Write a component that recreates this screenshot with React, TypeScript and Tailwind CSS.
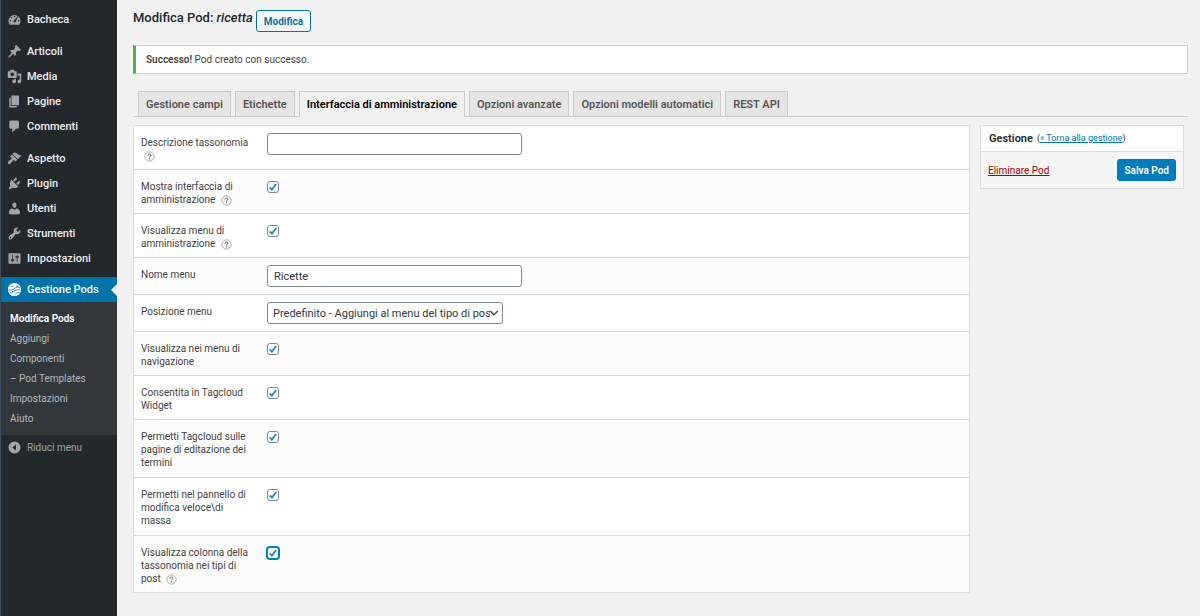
import { useState, type ReactNode } from "react";

type MenuEntry = { name: string; icon: ReactNode };

const path = (d: string) => <path d={d} fillRule="evenodd" />;

function Icon({ children }: { children: ReactNode }) {
  return (
    <svg viewBox="0 0 20 20" className="size-[15px] shrink-0 fill-current" aria-hidden="true">
      {children}
    </svg>
  );
}

const menuGroups: MenuEntry[][] = [
  [
    {
      name: "Bacheca",
      icon: path(
        "M3.76 17h12.48A7.98 7.98 0 0 0 18 12a8 8 0 0 0-16 0c0 1.88.66 3.62 1.76 5zM10 5a1 1 0 1 1 0 2 1 1 0 0 1 0-2zM6 6.500a1 1 0 1 1 0 2 1 1 0 0 1 0-2zM14.6 6.300l-3.100 6.700a1.500 1.500 0 1 1-2.400-1.700l4.900-5.400c.3-.3.8 0 .6.4zM4.500 10.500a1 1 0 1 1 0 2 1 1 0 0 1 0-2zM15.500 10.500a1 1 0 1 1 0 2 1 1 0 0 1 0-2z"
      ),
    },
  ],
  [
    {
      name: "Articoli",
      icon: path(
        "M10.44 3.02l1.82-1.82 6.36 6.35-1.83 1.82c-1.05-.68-2.48-.57-3.41.36l-.75.75c-.92.93-1.04 2.35-.35 3.41l-1.83 1.82-2.41-2.41-2.8 2.79c-.42.42-3.38 2.71-3.8 2.29s1.86-3.39 2.28-3.81l2.79-2.79L4.1 9.36l1.83-1.82c1.05.69 2.48.57 3.4-.36l.75-.75c.93-.92 1.05-2.35.36-3.41z"
      ),
    },
    {
      name: "Media",
      icon: path(
        "M13 11V4c0-.55-.45-1-1-1h-1.67L9 1H5L3.67 3H2c-.55 0-1 .45-1 1v7c0 .55.45 1 1 1h10c.55 0 1-.45 1-1zM7 4.5c1.38 0 2.5 1.12 2.5 2.5S8.38 9.5 7 9.5 4.5 8.38 4.5 7 5.62 4.5 7 4.5zM14 6h5v10.5c0 1.38-1.12 2.5-2.5 2.5S14 17.88 14 16.5s1.12-2.5 2.5-2.5c.17 0 .34.02.5.05V9h-3V6zm-4 8.05V13h2v3.5c0 1.38-1.12 2.5-2.5 2.5S7 17.88 7 16.5 8.12 14 9.5 14c.17 0 .34.02.5.05z"
      ),
    },
    { name: "Pagine", icon: path("M6 15V2h10v13H6zm-1 1h8v2H3V5h2v11z") },
    {
      name: "Commenti",
      icon: path("M5 2h9c1.1 0 2 .9 2 2v7c0 1.1-.9 2-2 2h-2l-5 5v-5H5c-1.1 0-2-.9-2-2V4c0-1.1.9-2 2-2z"),
    },
  ],
  [
    {
      name: "Aspetto",
      icon: path(
        "M14.48 11.06L7.41 3.99l1.5-1.5c.5-.56 2.3-.47 3.51.32 1.21.8 1.43 1.28 2.91 2.1 1.18.64 2.45 1.26 4.45.85zm-.71.71L6.7 4.7 4.93 6.47c-.39.39-.39 1.02 0 1.41l1.06 1.06c.39.39.39 1.03 0 1.42-.6.6-1.43 1.11-2.21 1.69-.35.26-.7.53-1.01.84C1.43 14.23.4 16.08 1.4 17.07c.99 1 2.84-.03 4.18-1.36.31-.31.58-.66.85-1.02.57-.78 1.08-1.61 1.69-2.21.39-.39 1.02-.39 1.41 0l1.06 1.06c.39.39 1.02.39 1.41 0z"
      ),
    },
    {
      name: "Plugin",
      icon: path(
        "M13.11 4.36L9.87 7.6 8 5.73l3.24-3.24c.35-.34 1.05-.2 1.56.32.52.51.66 1.21.31 1.55zm-8 1.77l.91-1.12 9.01 9.01-1.19.84c-.71.71-2.63 1.16-3.82 1.16H6.14L4.9 17.26c-.59.59-1.54.59-2.12 0-.59-.58-.59-1.53 0-2.12l1.24-1.24v-3.88c0-1.13.4-3.19 1.09-3.89zm7.26 3.97l3.24-3.24c.34-.35 1.04-.21 1.55.31.52.51.66 1.21.31 1.55l-3.24 3.25z"
      ),
    },
    {
      name: "Utenti",
      icon: path(
        "M10 9.25c-2.27 0-2.73-3.44-2.73-3.44C7 4.02 7.82 2 9.97 2c2.16 0 2.98 2.02 2.71 3.81 0 0-.41 3.44-2.68 3.44zm0 2.57L12.72 10c2.39 0 4.52 2.33 4.52 4.53v2.49s-3.65 1.13-7.24 1.13c-3.65 0-7.24-1.13-7.24-1.13v-2.49c0-2.25 1.94-4.48 4.47-4.48z"
      ),
    },
    {
      name: "Strumenti",
      icon: path(
        "M16.68 9.77c-1.34 1.34-3.3 1.67-4.95.99l-5.41 6.52c-.99.99-2.59.99-3.58 0s-.99-2.59 0-3.57l6.52-5.42c-.68-1.65-.35-3.61.99-4.95 1.28-1.28 3.12-1.62 4.72-1.06l-2.89 2.89 2.82 2.82 2.86-2.87c.53 1.58.18 3.39-1.08 4.65zM3.81 16.21c.4.39 1.04.39 1.43 0 .4-.4.4-1.04 0-1.43-.39-.4-1.03-.4-1.43 0-.39.39-.39 1.03 0 1.43z"
      ),
    },
    {
      name: "Impostazioni",
      icon: path(
        "M18 16V4c0-.55-.45-1-1-1H3c-.55 0-1 .45-1 1v12c0 .55.45 1 1 1h14c.55 0 1-.45 1-1zM8 11h1c.55 0 1 .45 1 1s-.45 1-1 1H8v1.5c0 .28-.22.5-.5.5s-.5-.22-.5-.5V13H6c-.55 0-1-.45-1-1s.45-1 1-1h1V5.5c0-.28.22-.5.5-.5s.5.22.5.5V11zm5-2h-1c-.55 0-1-.45-1-1s.45-1 1-1h1V5.5c0-.28.22-.5.5-.5s.5.22.5.5V7h1c.55 0 1 .45 1 1s-.45 1-1 1h-1v5.5c0 .28-.22.5-.5.5s-.5-.22-.5-.5V9z"
      ),
    },
  ],
];

const submenu = ["Aggiungi", "Componenti", "– Pod Templates", "Impostazioni", "Aiuto"];

function Sidebar() {
  return (
    <nav aria-label="Menu principale" className="flex w-[117px] shrink-0 flex-col border-l border-[#3f4f59] bg-[#23282d] pt-[7px] text-[11px] leading-[13px] font-medium text-[#eee]">
      <div className="flex flex-col gap-[7px]">
        {menuGroups.map((group) => (
          <ul key={group[0].name}>
            {group.map((entry) => (
              <li key={entry.name}>
                <a href="#" className="flex h-[25px] items-center gap-[5px] pl-[6px]">
                  <span className="text-[#a0a5aa]"><Icon>{entry.icon}</Icon></span>
                  {entry.name}
                </a>
              </li>
            ))}
          </ul>
        ))}
      </div>
      <a href="#" className="relative mt-[6px] flex h-[25px] items-center gap-[5px] bg-[#0073aa] pl-[6px] text-white">
        <svg viewBox="0 0 20 20" className="size-[15px] shrink-0" aria-hidden="true">
          <circle cx="10" cy="10" r="8.800" fill="#fff" />
          <path
            d="M1.500 10.500c3.500 1.200 6-.2 8.500-2s5-2 8-1.500M4 14.500c3 0 4.500-1.500 6.500-3s5-1.500 7.500-.5M10.500 17c1-2 3-3 6-3M5 6c1.500.6 3 0 4.500-1"
            fill="none"
            stroke="#0073aa"
            strokeWidth="1"
          />
          <circle cx="13.500" cy="5.500" r="1" fill="#0073aa" />
          <circle cx="7.500" cy="12.800" r="1" fill="#0073aa" />
        </svg>
        Gestione Pods
        <svg viewBox="0 0 6 12" className="absolute right-0 h-3 w-[6px]" aria-hidden="true">
          <path d="M6 0v12L0 6z" fill="#f1f1f1" />
        </svg>
      </a>
      <ul className="bg-[#32373c] pt-[6px] pb-[7px] text-[10px] font-normal text-[#b4b9be]">
        <li><a href="#" className="flex h-5 items-center pl-[9px] font-semibold text-white">Modifica Pods</a></li>
        {submenu.map((name) => (
          <li key={name}><a href="#" className="flex h-5 items-center pl-[9px]">{name}</a></li>
        ))}
      </ul>
      <button type="button" className="flex h-[25px] items-center gap-[5px] pl-[6px] text-[10px] font-normal text-[#a0a5aa]">
        <Icon>{path("M10 2a8 8 0 1 1 0 16 8 8 0 0 1 0-16zm2 12V6l-5 4z")}</Icon>
        Riduci menu
      </button>
    </nav>
  );
}

const tabs = [
  "Gestione campi",
  "Etichette",
  "Interfaccia di amministrazione",
  "Opzioni avanzate",
  "Opzioni modelli automatici",
  "REST API",
];

function Help() {
  return (
    <svg viewBox="0 0 20 20" className="ml-[3px] inline-block size-[11px] align-[-3px]" role="img" aria-label="Aiuto">
      <circle cx="10" cy="10" r="8.500" fill="#f6f6f6" stroke="#999" strokeWidth="1.300" />
      <path d="M7.300 8.200c0-3.600 5.400-3.600 5.400-.5 0 1.800-2.700 1.900-2.700 4M10 13.300v2" fill="none" stroke="#666" strokeWidth="1.800" />
    </svg>
  );
}

type Field = {
  id: string;
  label: string;
  kind: "text" | "check" | "select";
  help?: boolean;
  value?: string;
  active?: boolean;
  tall?: boolean;
};

const fields: Field[] = [
  { id: "descrizione", label: "Descrizione tassonomia", kind: "text", help: true, value: "" },
  { id: "mostra-ui", label: "Mostra interfaccia di amministrazione", kind: "check", help: true },
  { id: "mostra-menu", label: "Visualizza menu di amministrazione", kind: "check", help: true },
  { id: "nome-menu", label: "Nome menu", kind: "text", value: "Ricette" },
  { id: "posizione", label: "Posizione menu", kind: "select", value: "Predefinito - Aggiungi al menu del tipo di pos" },
  { id: "navigazione", label: "Visualizza nei menu di navigazione", kind: "check" },
  { id: "tagcloud", label: "Consentita in Tagcloud Widget", kind: "check" },
  { id: "tagcloud-termini", label: "Permetti Tagcloud sulle pagine di editazione dei termini", kind: "check", tall: true },
  { id: "modifica-veloce", label: "Permetti nel pannello di modifica veloce\\di massa", kind: "check", tall: true },
  { id: "colonna", label: "Visualizza colonna della tassonomia nei tipi di post", kind: "check", help: true, active: true, tall: true },
];

function Check({ id, active }: { id: string; active?: boolean }) {
  return (
    <span className="relative mt-1 block size-3">
      <input
        id={id}
        type="checkbox"
        defaultChecked
        className={
          active
            ? "peer block size-3 appearance-none rounded-[3px] border border-[#007cba] bg-white ring-1 ring-[#007cba]"
            : "peer block size-3 appearance-none rounded-[3px] border border-[#7e8993] bg-white"
        }
      />
      <svg viewBox="0 0 12 12" className="pointer-events-none absolute inset-0 hidden size-3 peer-checked:block" aria-hidden="true">
        <path d="M2.700 6.300l2.200 2.300 4.300-5.600" fill="none" stroke="#1e8cbe" strokeWidth="1.900" />
      </svg>
    </span>
  );
}

function Control({ field }: { field: Field }) {
  if (field.kind === "check") return <Check id={field.id} active={field.active} />;
  if (field.kind === "text")
    return (
      <input
        id={field.id}
        type="text"
        defaultValue={field.value}
        className="block h-[22px] w-[255px] rounded-[3px] border border-[#7e8993] bg-white px-[6px] text-[11px] text-[#32373c]"
      />
    );
  return (
    <span className="relative block w-[236px]">
      <select
        id={field.id}
        className="block h-[22px] w-full appearance-none rounded-[3px] border border-[#7e8993] bg-white pr-3 pl-[5px] text-[11px] text-[#32373c]"
      >
        <option>{field.value}</option>
      </select>
      <svg viewBox="0 0 10 10" className="pointer-events-none absolute top-[6px] right-1 size-[10px]" aria-hidden="true">
        <path d="M1.200 3l3.800 3.800L8.800 3" fill="none" stroke="#444" strokeWidth="1.300" />
      </svg>
    </span>
  );
}

export default function App() {
  const [current, setCurrent] = useState(tabs[2]);
  return (
    <div className="flex min-h-screen bg-[#f1f1f1] font-[Roboto,sans-serif] text-[10px] leading-[13px] text-[#444]">
      <Sidebar />
      <main className="min-w-0 flex-1 pr-3 pb-4 pl-4">
        <header className="flex gap-[3px] pt-[10px] text-[#23282d]">
          <h1 className="text-[13px] leading-[15px] font-medium">
            Modifica Pod: <em>ricetta</em>
          </h1>
          <button type="button" className="h-[22px] rounded-[3px] border border-[#0071a1] bg-[#f3f5f6] px-[7px] text-[10px] font-semibold text-[#0071a1]">
            Modifica
          </button>
        </header>

        <div role="status" className="mt-[13px] flex h-[29px] items-center border border-l-3 border-[#ccd0d4] border-l-[#46b450] bg-white pl-[10px]">
          <p><strong className="font-semibold">Successo!</strong> Pod creato con successo.</p>
        </div>

        <div role="tablist" className="mt-[17px] flex gap-1 border-b border-[#ccc] pl-[5px]">
          {tabs.map((name) => (
            <button
              key={name}
              type="button"
              role="tab"
              aria-selected={name === current}
              onClick={() => setCurrent(name)}
              className={
                name === current
                  ? "-mb-px h-[26px] border border-b-0 border-[#ccc] bg-[#f1f1f1] px-[7px] text-[11px] font-semibold text-black"
                  : "h-[25px] border border-b-0 border-[#ccc] bg-[#e5e5e5] px-[7px] text-[11px] font-semibold text-[#555]"
              }
            >
              {name}
            </button>
          ))}
        </div>

        <div className="mt-2 flex items-start gap-[10px] pr-1">
          <form className="min-w-0 flex-1 border border-[#ddd] bg-white">
            {fields.map((field) => (
              <div
                key={field.id}
                className={
                  field.tall
                    ? "flex min-h-[58px] border-b border-[#ddd] py-[7px] pl-[7px] last:min-h-0 last:border-b-0 even:bg-[#fcfcfc]"
                    : "flex border-b border-[#ddd] py-[7px] pl-[7px] even:bg-[#fcfcfc]"
                }
              >
                <div className="w-[126px] shrink-0 pt-[3px] pr-[17px]">
                  <label htmlFor={field.id}>{field.label}</label>
                  {field.help && <> <Help /></>}
                </div>
                <Control field={field} />
              </div>
            ))}
          </form>

          <aside className="w-[204px] shrink-0 border border-[#ddd] bg-[#f5f5f5]">
            <h2 className="flex h-[26px] items-center gap-1 border-b border-[#ddd] bg-white pl-2 text-[11px] font-semibold text-[#23282d]">
              Gestione
              <span className="text-[9px] font-normal">
                (<a href="#" className="text-[#0073aa] underline">« Torna alla gestione</a>)
              </span>
            </h2>
            <div className="flex h-[36px] items-center justify-between px-[7px]">
              <a href="#" className="text-[#a00] underline">Eliminare Pod</a>
              <button type="button" className="h-[22px] rounded-[3px] bg-[#007cba] px-[7px] text-[10px] font-semibold text-white">
                Salva Pod
              </button>
            </div>
          </aside>
        </div>
      </main>
    </div>
  );
}
